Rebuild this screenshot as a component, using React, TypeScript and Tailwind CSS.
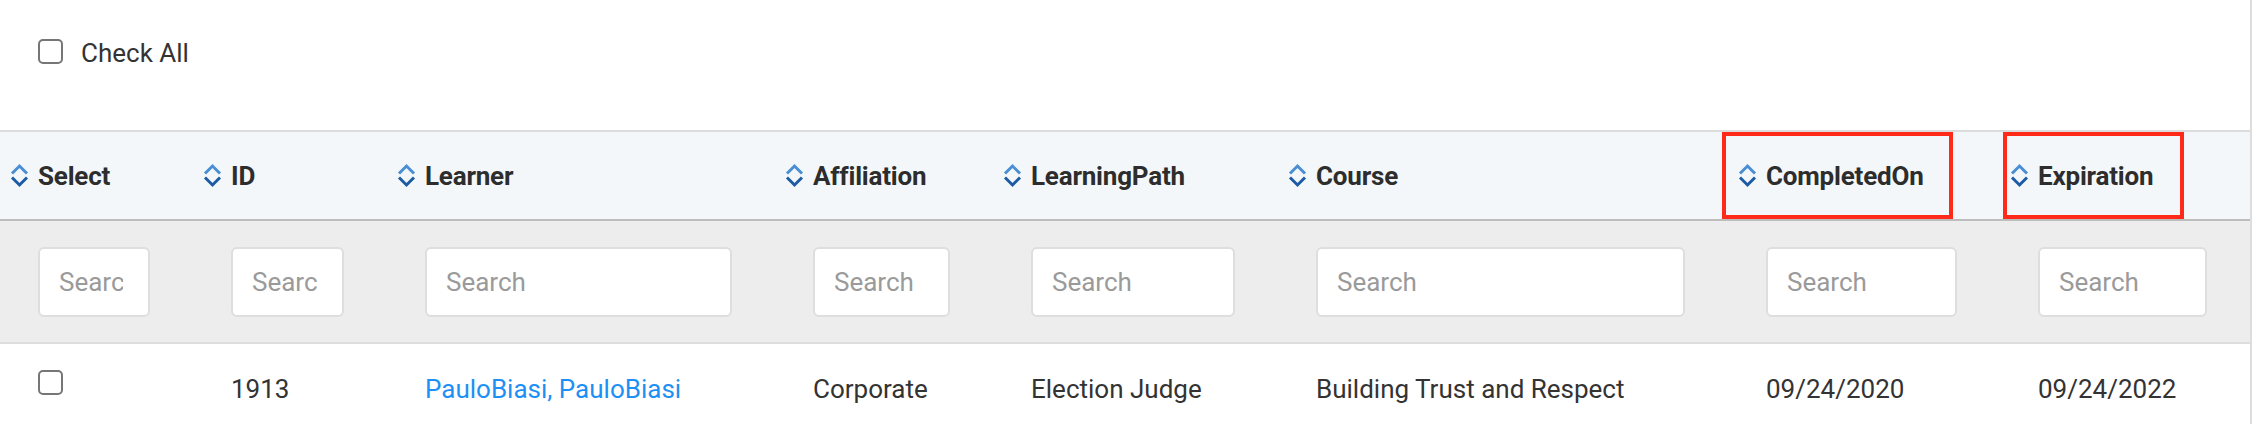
import React from "react";

const cols = [
  { key: "Select", w: "w-[193px]" },
  { key: "ID", w: "w-[194px]" },
  { key: "Learner", w: "w-[388px]" },
  { key: "Affiliation", w: "w-[218px]" },
  { key: "LearningPath", w: "w-[285px]" },
  { key: "Course", w: "w-[450px]" },
  { key: "CompletedOn", w: "w-[272px]" },
  { key: "Expiration", w: "w-[250px]" },
];

function SortIcon() {
  return (
    <svg width="19" height="25" viewBox="0 0 19 25" className="shrink-0">
      <polyline points="2,10.5 9.5,3 17,10.5" fill="none" stroke="#4a8ed4" strokeWidth="3" strokeLinejoin="miter" />
      <polyline points="2,14.5 9.5,22 17,14.5" fill="none" stroke="#1d5ca3" strokeWidth="3" strokeLinejoin="miter" />
    </svg>
  );
}

function Box() {
  return <span className="block w-[25px] h-[25px] shrink-0 rounded-[5px] border-2 border-[#767676] bg-white" />;
}

export default function App() {
  return (
    <div
      className="w-[2252px] h-[424px] bg-white border-r-2 border-[#dddddd] overflow-hidden text-[#333333]"
      style={{ fontFamily: "Roboto, 'Liberation Sans', sans-serif" }}
    >
      <div className="h-[130px] pt-[38px] pl-[38px]">
        <div className="flex items-center gap-[18px] h-[26px]">
          <Box />
          <span className="text-[26px] leading-none pt-[4px]">Check All</span>
        </div>
      </div>

      {/* header */}
      <div className="flex h-[91px] bg-[#f4f7f9] border-t-2 border-b-2 border-t-[#dcdcdc] border-b-[#bdbdbd]">
        {cols.map((c) => (
          <div key={c.key} className={`${c.w} relative flex items-center pl-[10px] gap-[9px]`}>
            {c.key === "CompletedOn" && (
              <div className="absolute left-[-6px] top-0 w-[231px] h-[87px] border-4 border-[#ff2a1a]" />
            )}
            {c.key === "Expiration" && (
              <div className="absolute left-[3px] top-0 w-[181px] h-[87px] border-4 border-[#ff2a1a]" />
            )}
            <SortIcon />
            <span className="text-[26px] font-bold leading-none text-[#2d2d2d] tracking-[-0.2px]">{c.key}</span>
          </div>
        ))}
      </div>

      {/* filter row */}
      <div className="flex h-[123px] bg-[#ededed] border-b-2 border-[#dddddd]">
        {cols.map((c) => (
          <div key={c.key} className={`${c.w} pl-[38px] pr-[43px] pt-[26px]`}>
            <input
              placeholder="Search"
              className="block w-full h-[70px] rounded-[6px] border-2 border-[#dedede] bg-white pl-[19px] pr-[25px] text-[26px] placeholder:text-[#9a9a9a] outline-none"
              style={{ fontFamily: "Roboto, 'Liberation Sans', sans-serif" }}
            />
          </div>
        ))}
      </div>

      {/* data row */}
      <div className="flex pt-[26px] text-[26px] leading-none">
        <div className="w-[193px] pl-[38px]">
          <Box />
        </div>
        <div className="w-[194px] pl-[38px] pt-[6px]">1913</div>
        <div className="w-[388px] pl-[38px] pt-[6px] text-[#1e90f5]">PauloBiasi, PauloBiasi</div>
        <div className="w-[218px] pl-[38px] pt-[6px]">Corporate</div>
        <div className="w-[285px] pl-[38px] pt-[6px]">Election Judge</div>
        <div className="w-[450px] pl-[38px] pt-[6px]">Building Trust and Respect</div>
        <div className="w-[272px] pl-[38px] pt-[6px]">09/24/2020</div>
        <div className="w-[250px] pl-[38px] pt-[6px]">09/24/2022</div>
      </div>
    </div>
  );
}
